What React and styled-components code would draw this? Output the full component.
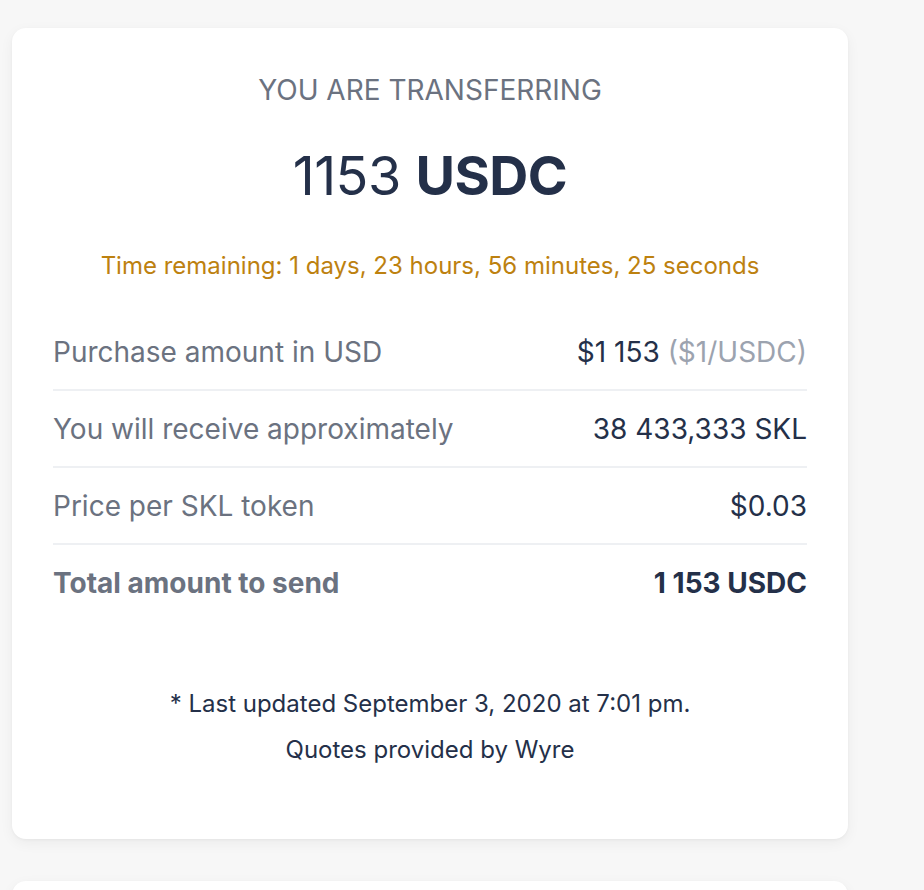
import React from 'react';
import styled, { createGlobalStyle } from 'styled-components';

const colors = {
  page: '#f7f7f7',
  white: '#ffffff',
  navy: '#243049',
  gray: '#6b7280',
  light: '#9ca3af',
  line: '#eef0f3',
  amber: '#bd810f'
};

const GlobalStyle = createGlobalStyle`
  html, body {
    margin: 0;
    padding: 0;
    background: ${colors.page};
    font-family: Inter, "Noto Sans", "Liberation Sans", sans-serif;
  }
`;

const Page = styled.div`
  padding: 28px 76px 0 12px;
  display: flex;
  flex-direction: column;
  gap: 42px;
  height: 890px;
  overflow: hidden;
  box-sizing: border-box;
`;

const Card = styled.div`
  background: ${colors.white};
  border-radius: 14px;
  box-shadow: 0 4px 14px rgba(0, 0, 0, 0.05), 0 1px 3px rgba(0, 0, 0, 0.04);
  padding: ${(p) => (p.$empty ? '0' : '44px 41px 66px')};
  min-height: ${(p) => (p.$empty ? '60px' : 'auto')};
  flex-shrink: 0;
`;

const Heading = styled.div`
  text-align: center;
  text-transform: uppercase;
  color: ${colors.gray};
  font-size: 28px;
  line-height: 36px;
`;

const Amount = styled.div`
  text-align: center;
  margin-top: 36px;
  color: ${colors.navy};
  font-size: 54px;
  line-height: 64px;
  letter-spacing: -0.5px;
  b {
    font-weight: 700;
  }
`;

const Timer = styled.div`
  text-align: center;
  margin-top: 43px;
  color: ${colors.amber};
  font-size: 24px;
  line-height: 30px;
`;

const Rows = styled.div`
  margin-top: 33px;
  display: flex;
  flex-direction: column;
`;

const Row = styled.div`
  display: flex;
  justify-content: space-between;
  align-items: center;
  height: 75px;
  font-size: 28px;
  font-weight: ${(p) => (p.$total ? 700 : 400)};
  & + & {
    border-top: 2px solid ${colors.line};
  }
`;

const Label = styled.span`
  color: ${colors.gray};
`;

const Value = styled.span`
  color: ${colors.navy};
`;

const Muted = styled.span`
  color: ${colors.light};
`;

const Footer = styled.div`
  margin-top: 61px;
  text-align: center;
  color: ${colors.navy};
  font-size: 24px;
  line-height: 46px;
`;

const rows = [
  { label: 'Purchase amount in USD', value: '$1 153', extra: '($1/USDC)' },
  { label: 'You will receive approximately', value: '38 433,333 SKL' },
  { label: 'Price per SKL token', value: '$0.03' },
  { label: 'Total amount to send', value: '1 153 USDC', total: true }
];

export default function App() {
  return (
    <>
      <GlobalStyle />
      <Page>
        <Card>
          <Heading>You are transferring</Heading>
          <Amount>
            1153 <b>USDC</b>
          </Amount>
          <Timer>Time remaining: 1 days, 23 hours, 56 minutes, 25 seconds</Timer>
          <Rows>
            {rows.map((row) => (
              <Row key={row.label} $total={row.total}>
                <Label>{row.label}</Label>
                <Value>
                  {row.value}
                  {row.extra && <Muted> {row.extra}</Muted>}
                </Value>
              </Row>
            ))}
          </Rows>
          <Footer>
            <div>* Last updated September 3, 2020 at 7:01 pm.</div>
            <div>Quotes provided by Wyre</div>
          </Footer>
        </Card>
        <Card $empty />
      </Page>
    </>
  );
}
